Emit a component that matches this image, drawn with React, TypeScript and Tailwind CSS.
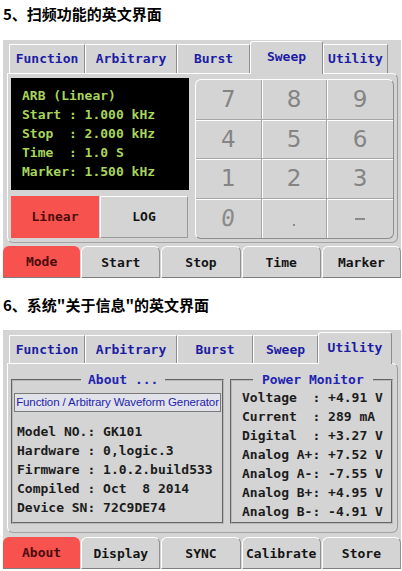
import React from "react";

const mono = "font-['DejaVu_Sans_Mono','Liberation_Mono',monospace]";
const cjk = "font-['Noto_Sans_CJK_SC','Noto_Sans',sans-serif]";
const sans = "font-['DejaVu_Sans','Liberation_Sans',sans-serif]";
const arial = "font-['Liberation_Sans','Arial',sans-serif]";

type TabDef = { label: string; w: string };

function TopTabs({
  tabs,
  active,
  rowH,
  activeH,
  idleH,
}: {
  tabs: TabDef[];
  active: number;
  rowH: string;
  activeH: string;
  idleH: string;
}) {
  return (
    <div className={`relative z-10 flex items-end pl-[6px] ${rowH}`}>
      {tabs.map((t, i) =>
        i === active ? (
          <div
            key={t.label}
            className={`${t.w} ${activeH} -mb-px flex items-center justify-center rounded-t-[3px] border-l border-r border-t border-l-white border-r-[#8e8e8e] border-t-white bg-[#d4d4d4] pb-[2px] text-[13px] font-bold text-[#1c1ca4] ${mono}`}
          >
            {t.label}
          </div>
        ) : (
          <div
            key={t.label}
            className={`${t.w} ${idleH} flex items-center justify-center border-l border-r border-t border-l-white border-r-[#8e8e8e] border-t-white bg-[#d4d4d4] text-[13px] font-bold text-[#1c1ca4] ${mono}`}
          >
            {t.label}
          </div>
        )
      )}
    </div>
  );
}

function BottomTabs({ labels }: { labels: string[] }) {
  return (
    <div className="flex h-[32px]">
      {labels.map((l, i) =>
        i === 0 ? (
          <div
            key={l}
            className={`flex flex-1 items-center justify-center rounded-t-[6px] border-b border-b-[#7e7e7e] bg-[#f8524e] pt-px text-[13px] font-bold text-[#4a0c0c] ${mono}`}
          >
            {l}
          </div>
        ) : (
          <div
            key={l}
            className={`ml-px flex flex-1 items-center justify-center rounded-t-[6px] border-b border-l border-r border-t border-b-[#7e7e7e] border-l-white border-r-[#909090] border-t-white bg-[#d4d4d4] pt-px text-[13px] font-bold text-[#141414] ${mono}`}
          >
            {l}
          </div>
        )
      )}
    </div>
  );
}

const mainTabs1: TabDef[] = [
  { label: "Function", w: "w-[76px]" },
  { label: "Arbitrary", w: "w-[92px]" },
  { label: "Burst", w: "w-[73px]" },
  { label: "Sweep", w: "w-[73px]" },
  { label: "Utility", w: "w-[65px]" },
];

const mainTabs2: TabDef[] = [
  { label: "Function", w: "w-[76px]" },
  { label: "Arbitrary", w: "w-[92px]" },
  { label: "Burst", w: "w-[76px]" },
  { label: "Sweep", w: "w-[65px]" },
  { label: "Utility", w: "w-[74px]" },
];

const sweepLines = [
  "ARB (Linear)",
  "Start : 1.000 kHz",
  "Stop  : 2.000 kHz",
  "Time  : 1.0 S",
  "Marker: 1.500 kHz",
];

const keys = ["7", "8", "9", "4", "5", "6", "1", "2", "3", "0", ".", "-"];

const aboutLines = [
  "Model NO.: GK101",
  "Hardware : 0,logic.3",
  "Firmware : 1.0.2.build533",
  "Compiled : Oct  8 2014",
  "Device SN: 72C9DE74",
];

const powerLines = [
  "Voltage  : +4.91 V",
  "Current  : 289 mA",
  "Digital  : +3.27 V",
  "Analog A+: +7.52 V",
  "Analog A-: -7.55 V",
  "Analog B+: +4.95 V",
  "Analog B-: -4.91 V",
];

const contentBox =
  "ml-[4px] mr-[3px] h-[170px] rounded-tr-[6px] rounded-b-[6px] border border-b-[#a4a4a4] border-l-white border-r-[#9a9a9a] border-t-white";

function Keypad() {
  return (
    <div className="grid h-[160px] w-[199px] grid-cols-3 grid-rows-4 overflow-hidden rounded-[6px] border border-b-[#8e8e8e] border-l-white border-r-[#8e8e8e] border-t-white">
      {keys.map((k, i) => (
        <div
          key={k}
          className={`flex items-center justify-center border-[#a6a6a6] ${i % 3 !== 2 ? "border-r" : ""} ${i < 9 ? "border-b" : ""} ${i % 3 !== 0 ? "shadow-[inset_1px_0_0_#fff]" : ""} ${i >= 3 ? "[box-shadow:inset_0_1px_0_#fff]" : ""} ${i >= 3 && i % 3 !== 0 ? "[box-shadow:inset_1px_1px_0_#fff]" : ""}`}
        >
          {k === "0" ? (
            <span className={`-skew-x-6 text-[23px] text-[#8a8a8a] ${mono}`}>0</span>
          ) : k === "." ? (
            <span className="mt-[14px] block h-[2px] w-[2px] bg-[#8a8a8a]" />
          ) : k === "-" ? (
            <span className="mt-[2px] block h-[2px] w-[10px] bg-[#8a8a8a]" />
          ) : (
            <span className={`text-[23px] text-[#848484] ${sans}`}>{k}</span>
          )}
        </div>
      ))}
    </div>
  );
}

function SweepPanel() {
  return (
    <div className="ml-[3px] w-[398px] bg-[#d4d4d4] pt-px">
      <TopTabs tabs={mainTabs1} active={3} rowH="h-[32px]" activeH="h-[33px]" idleH="h-[29px]" />
      <div className={contentBox}>
        <div className="flex gap-[6px] pl-[3px] pt-[4px]">
          <div className="flex w-[178px] flex-col gap-[6px]">
            <div className={`h-[112px] bg-black pl-[11px] pt-[8px] text-[13px] font-bold leading-[19px] text-[#a8d55c] ${mono}`}>
              {sweepLines.map((l) => (
                <div key={l} className="whitespace-pre">
                  {l}
                </div>
              ))}
            </div>
            <div className="flex h-[42px] gap-px">
              <div className={`flex w-[88px] items-center justify-center bg-[#f8524e] text-[13px] font-bold text-[#4a0c0c] ${mono}`}>
                Linear
              </div>
              <div className={`flex w-[88px] items-center justify-center border border-b-[#9a9a9a] border-l-white border-r-[#9a9a9a] border-t-white text-[13px] font-bold text-[#141414] ${mono}`}>
                LOG
              </div>
            </div>
          </div>
          <div className="pt-px">
            <Keypad />
          </div>
        </div>
      </div>
      <div className="mt-[3px]">
        <BottomTabs labels={["Mode", "Start", "Stop", "Time", "Marker"]} />
      </div>
    </div>
  );
}

function GroupBox({
  title,
  legendMl,
  legendPx,
  w,
  children,
}: {
  title: string;
  legendMl: string;
  legendPx: string;
  w: string;
  children: React.ReactNode;
}) {
  return (
    <fieldset className={`${w} h-[152px] border-2 border-[#b8b8b8] px-px [border-style:groove]`}>
      <legend className={`${legendMl} ${legendPx} text-[13px] font-bold leading-[16px] text-[#2323b2] ${mono}`}>
        {title}
      </legend>
      {children}
    </fieldset>
  );
}

function AboutPanel() {
  return (
    <div className="ml-[3px] w-[398px] bg-[#d4d4d4] pt-[2px]">
      <TopTabs tabs={mainTabs2} active={4} rowH="h-[31px]" activeH="h-[32px]" idleH="h-[28px]" />
      <div className={contentBox}>
        <div className="flex gap-[6px] pl-[3px] pt-[8px]">
          <GroupBox title="About ..." legendMl="ml-[67px]" legendPx="px-[7px]" w="w-[213px]">
            <div className={`mt-[5px] flex h-[19px] items-center justify-center whitespace-nowrap border border-[#7a7a7a] bg-[#e2e2ea] text-[11.5px] tracking-[-0.1px] text-[#2424aa] ${arial}`}>
              Function / Arbitrary Waveform Generator
            </div>
            <div className={`mt-[10px] pl-[3px] text-[13px] font-bold leading-[19px] text-[#1c1c1c] ${mono}`}>
              {aboutLines.map((l) => (
                <div key={l} className="whitespace-pre">
                  {l}
                </div>
              ))}
            </div>
          </GroupBox>
          <GroupBox title="Power Monitor" legendMl="ml-[20px]" legendPx="px-[9px]" w="w-[163px]">
            <div className={`pl-[9px] text-[13px] font-bold leading-[19px] text-[#1c1c1c] ${mono}`}>
              {powerLines.map((l) => (
                <div key={l} className="whitespace-pre">
                  {l}
                </div>
              ))}
            </div>
          </GroupBox>
        </div>
      </div>
      <div className="mt-[4px]">
        <BottomTabs labels={["About", "Display", "SYNC", "Calibrate", "Store"]} />
      </div>
    </div>
  );
}

export default function App() {
  return (
    <div className="h-[571px] w-[402px] overflow-hidden bg-white">
      <div className={`h-[40px] pl-[3px] pt-[4px] text-[15px] font-bold leading-[20px] text-black ${cjk}`}>
        5、扫频功能的英文界面
      </div>
      <SweepPanel />
      <div className={`flex h-[52px] items-center pl-[3px] pt-[2px] text-[15px] font-bold leading-[20px] text-black ${cjk}`}>
        6、系统"关于信息"的英文界面
      </div>
      <AboutPanel />
    </div>
  );
}
